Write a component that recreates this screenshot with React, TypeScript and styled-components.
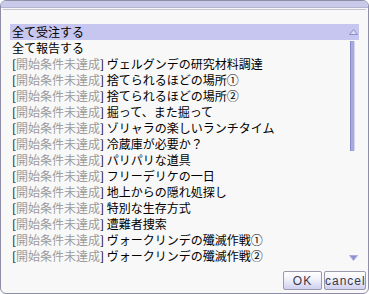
import React from "react";
import styled, { createGlobalStyle } from "styled-components";

const Global = createGlobalStyle`
  html, body { margin: 0; padding: 0; background: #ffffff; }
  body { font-family: "Noto Sans CJK JP", "Liberation Sans", sans-serif; }
`;

const Window = styled.div`
  box-sizing: border-box;
  width: 369px;
  height: 294px;
  border: 1px solid #8e8ea6;
  border-radius: 6px;
  background: #f8f8f8;
  overflow: hidden;
  display: flex;
  flex-direction: column;
`;

const TitleBar = styled.div`
  height: 6px;
  background: #c9c9ea;
  border-bottom: 1px solid #b4b4d0;
`;

const Divider = styled.div`
  height: 1px;
  margin: 1px 2px 0;
  background: #c4c4cc;
`;

const Body = styled.div`
  flex: 1;
  display: flex;
  flex-direction: column;
  padding: 14px 9px 3px 9px;
`;

const ListBox = styled.div`
  display: flex;
  height: 242px;
`;

const Rows = styled.div`
  flex: 1;
  display: flex;
  flex-direction: column;
`;

const Row = styled.div<{ $selected?: boolean }>`
  height: 16px;
  line-height: 16px;
  padding-left: 2px;
  font-size: 12px;
  color: #000;
  white-space: nowrap;
  background: ${(p) => (p.$selected ? "#c6c6f0" : "transparent")};
`;

const Bracket = styled.span`
  color: #000;
`;

const Cond = styled.span`
  color: #9c9c9c;
`;

const ScrollBar = styled.div`
  width: 12px;
  display: flex;
  flex-direction: column;
  align-items: center;
`;

const Arrow = styled.div`
  height: 16px;
  display: flex;
  align-items: center;
  justify-content: center;
`;

const Track = styled.div`
  flex: 1;
  width: 6px;
  display: flex;
  flex-direction: column;
`;

const Thumb = styled.div`
  box-sizing: border-box;
  width: 5px;
  height: 110px;
  margin-top: 1px;
  background: #a9a9dc;
  border-left: 1px solid #8a8ac8;
  border-right: 1px solid #d4d4f0;
`;

const UpRowBg = styled.div`
  background: #c6c6f0;
  width: 100%;
`;

const Footer = styled.div`
  display: flex;
  justify-content: flex-end;
  gap: 2px;
  margin-top: 5px;
  margin-right: -7px;
`;

const Button = styled.button<{ $w: number }>`
  box-sizing: border-box;
  width: ${(p) => p.$w}px;
  height: 19px;
  padding: 0;
  border: 1px solid #9a9aac;
  border-radius: 2px;
  background: linear-gradient(#ffffff 0%, #f2f2fb 40%, #cfcff0 100%);
  font-family: "Liberation Sans", sans-serif;
  font-size: 12px;
  letter-spacing: 1px;
  color: #3a3a4a;
`;

const items = [
  "ヴェルグンデの研究材料調達",
  "捨てられるほどの場所①",
  "捨てられるほどの場所②",
  "掘って、また掘って",
  "ゾリャラの楽しいランチタイム",
  "冷蔵庫が必要か？",
  "パリパリな道具",
  "フリーデリケの一日",
  "地上からの隠れ処探し",
  "特別な生存方式",
  "遭難者捜索",
  "ヴォークリンデの殲滅作戦①",
  "ヴォークリンデの殲滅作戦②",
];

export default function App() {
  return (
    <>
      <Global />
      <Window>
        <TitleBar />
        <Divider />
        <Body>
          <ListBox>
            <Rows>
              <Row $selected>全て受注する</Row>
              <Row>全て報告する</Row>
              {items.map((t) => (
                <Row key={t}>
                  <Bracket>[</Bracket>
                  <Cond>開始条件未達成</Cond>
                  <Bracket>]</Bracket> {t}
                </Row>
              ))}
            </Rows>
            <ScrollBar>
              <UpRowBg>
                <Arrow>
                  <svg width="9" height="6" viewBox="0 0 9 6">
                    <path d="M4.5 0.5 L8.5 5.5 L0.5 5.5 Z" fill="#dcdcf4" stroke="#8c8cc8" strokeWidth="1" />
                  </svg>
                </Arrow>
              </UpRowBg>
              <Track>
                <Thumb />
              </Track>
              <Arrow>
                <svg width="9" height="6" viewBox="0 0 9 6">
                  <path d="M0.5 0.5 L8.5 0.5 L4.5 5.5 Z" fill="#9090d0" stroke="#b0b0e0" strokeWidth="1" />
                </svg>
              </Arrow>
            </ScrollBar>
          </ListBox>
          <Footer>
            <Button $w={39}>OK</Button>
            <Button $w={42}>cancel</Button>
          </Footer>
        </Body>
      </Window>
    </>
  );
}
